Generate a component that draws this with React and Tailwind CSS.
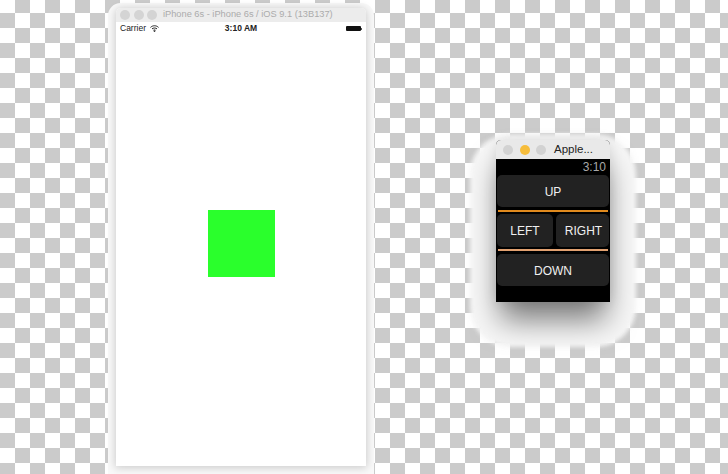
function Dot({ className }) {
  return <span className={"block size-[10px] rounded-full " + className}></span>;
}

function WatchButton({ label, className }) {
  return (
    <div className={"flex items-center justify-center rounded-[5px] bg-[#222222] pt-px text-[12px] text-[#f0f0f0] " + className}>
      {label}
    </div>
  );
}

function Divider({ color }) {
  return <div className={"mx-px h-[2px] " + color}></div>;
}

function WifiIcon() {
  return (
    <svg width="9" height="7" viewBox="0 0 9 7" fill="none" stroke="#222" strokeWidth="1">
      <path d="M0.5 2.4C2.8 0.2 6.2 0.2 8.5 2.4" />
      <path d="M2 3.9C3.4 2.7 5.6 2.7 7 3.9" />
      <path d="M3.4 5.3C4 4.8 5 4.8 5.6 5.3" />
      <circle cx="4.5" cy="6.2" r="0.4" fill="#222" />
    </svg>
  );
}

export default function App() {
  return (
    <div
      className="flex h-[474px] w-[728px] items-start overflow-hidden bg-white bg-[conic-gradient(#cbcbcb_25%,#ffffff_0_50%,#cbcbcb_0_75%,#ffffff_0)] bg-size-[30px_30px] bg-position-[0_-2px] pl-[116px] pt-[8px] font-['Liberation_Sans',sans-serif]"
    >
      {/* iPhone simulator */}
      <div className="relative h-[458px] w-[250px] shrink-0 rounded-t-[5px] bg-white shadow-[0_1px_8px_1px_rgba(0,0,0,0.18),0_3px_0_8px_#f9f9f9]">
        <div className="flex h-[14px] items-center rounded-t-[5px] bg-[#ececec] pl-[4px]">
          <div className="flex gap-[3.5px]">
            <Dot className="bg-[#d4d4d4]" />
            <Dot className="bg-[#d4d4d4]" />
            <Dot className="bg-[#d4d4d4]" />
          </div>
          <span className="ml-[6px] whitespace-nowrap text-[9.25px] text-[#ababab]">iPhone 6s - iPhone 6s / iOS 9.1 (13B137)</span>
        </div>
        <div className="flex h-[13px] items-center px-[4px] text-[8.5px] text-[#222222]">
          <div className="flex flex-1 items-center gap-[4px]">
            <span>Carrier</span>
            <WifiIcon />
          </div>
          <span className="font-bold">3:10 AM</span>
          <div className="flex flex-1 items-center justify-end">
            <span className="block h-[5px] w-[15px] rounded-[1px] bg-[#111111]"></span>
            <span className="block h-[2px] w-px bg-[#555555]"></span>
          </div>
        </div>
        <div className="ml-[92px] mt-[175px] size-[67px] bg-[#2aff2c]"></div>
      </div>

      {/* Apple Watch simulator */}
      <div className="relative ml-[130px] mt-[132px] w-[114px] shrink-0">
        <div className="absolute -bottom-[45px] -left-[26px] -right-[26px] -top-[6px] rounded-[40px] bg-[#f7f7f7] blur-[2px]"></div>
        <div className="relative h-[162px] rounded-t-[5px] bg-black shadow-[0_22px_30px_-4px_rgba(0,0,0,0.5),0_0_14px_rgba(0,0,0,0.1)]">
          <div className="flex h-[19px] items-center rounded-t-[5px] bg-[#e9e9e9] pl-[7px]">
            <div className="flex gap-[6.5px]">
              <Dot className="bg-[#d2d2d2]" />
              <Dot className="bg-[#f6bd3c]" />
              <Dot className="bg-[#d2d2d2]" />
            </div>
            <span className="ml-[8px] pt-px text-[11.5px] text-[#222222]">Apple...</span>
          </div>
          <div className="flex h-[16px] items-center justify-end pr-[4px] text-[12px] text-[#a8a8a8]">3:10</div>
          <div className="flex flex-col px-px">
            <WatchButton label="UP" className="h-[32px]" />
            <div className="mt-[3px]"><Divider color="bg-[#e08a1e]" /></div>
            <div className="mt-[2px] flex gap-[3px]">
              <WatchButton label="LEFT" className="h-[33px] w-[56px]" />
              <WatchButton label="RIGHT" className="h-[33px] flex-1 pl-[2px]" />
            </div>
            <div className="mt-[2px]"><Divider color="bg-[#e0a070]" /></div>
            <WatchButton label="DOWN" className="mt-[3px] h-[32px]" />
          </div>
        </div>
      </div>
    </div>
  );
}
